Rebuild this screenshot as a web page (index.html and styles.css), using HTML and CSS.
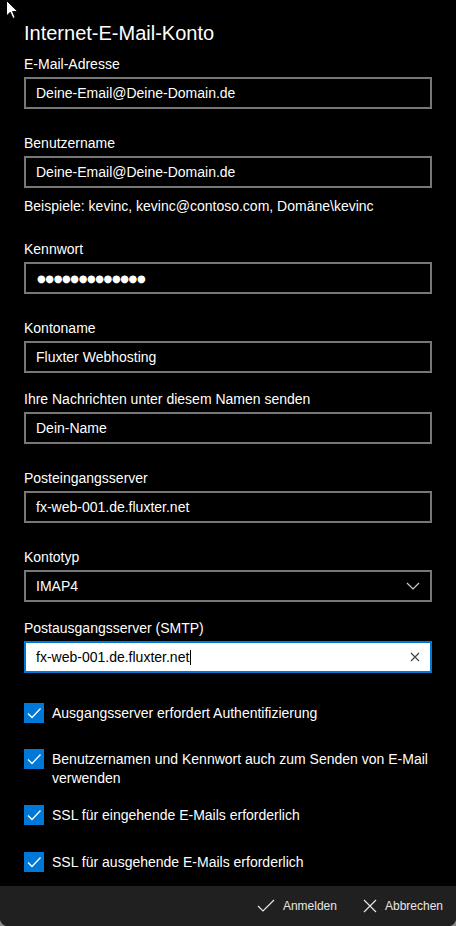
FILE: index.html
```html
<!DOCTYPE html>
<html lang="de">
<head>
  <meta charset="UTF-8" />
  <meta name="viewport" content="width=device-width, initial-scale=1" />
  <title>Internet-E-Mail-Konto</title>
  <link rel="stylesheet" href="styles.css">
</head>
<body>
  <div class="window">
    <div class="content">
      <h1 class="title">Internet-E-Mail-Konto</h1>

      <label class="label">E-Mail-Adresse</label>
      <div class="field">Deine-Email@Deine-Domain.de</div>

      <label class="label gap">Benutzername</label>
      <div class="field">Deine-Email@Deine-Domain.de</div>
      <p class="hint">Beispiele: kevinc, kevinc@contoso.com, Domäne\kevinc</p>

      <label class="label gap-hint">Kennwort</label>
      <div class="field password">●●●●●●●●●●●●●</div>

      <label class="label gap">Kontoname</label>
      <div class="field">Fluxter Webhosting</div>

      <label class="label gap-small">Ihre Nachrichten unter diesem Namen senden</label>
      <div class="field">Dein-Name</div>

      <label class="label gap">Posteingangsserver</label>
      <div class="field">fx-web-001.de.fluxter.net</div>

      <label class="label gap">Kontotyp</label>
      <div class="field select">
        <span>IMAP4</span>
        <svg class="chevron" width="14" height="8" viewBox="0 0 14 8">
          <path d="M1 1 L7 7 L13 1" fill="none" stroke="#cfcfcf" stroke-width="1.2"/>
        </svg>
      </div>

      <label class="label gap-small">Postausgangsserver (SMTP)</label>
      <div class="field focused">
        <span>fx-web-001.de.fluxter.net<span class="caret"></span></span>
        <svg class="clear" width="10" height="10" viewBox="0 0 10 10">
          <path d="M1 1 L9 9 M9 1 L1 9" fill="none" stroke="#444" stroke-width="1.2"/>
        </svg>
      </div>

      <div class="check first">
        <span class="box"><svg width="20" height="20" viewBox="0 0 20 20"><path d="M4 10.5 L8 14.5 L16.5 5.5" fill="none" stroke="#fff" stroke-width="1.3"/></svg></span>
        <span class="check-text">Ausgangsserver erfordert Authentifizierung</span>
      </div>
      <div class="check second">
        <span class="box"><svg width="20" height="20" viewBox="0 0 20 20"><path d="M4 10.5 L8 14.5 L16.5 5.5" fill="none" stroke="#fff" stroke-width="1.3"/></svg></span>
        <span class="check-text">Benutzernamen und Kennwort auch zum Senden von E-Mail verwenden</span>
      </div>
      <div class="check third">
        <span class="box"><svg width="20" height="20" viewBox="0 0 20 20"><path d="M4 10.5 L8 14.5 L16.5 5.5" fill="none" stroke="#fff" stroke-width="1.3"/></svg></span>
        <span class="check-text">SSL für eingehende E-Mails erforderlich</span>
      </div>
      <div class="check fourth">
        <span class="box"><svg width="20" height="20" viewBox="0 0 20 20"><path d="M4 10.5 L8 14.5 L16.5 5.5" fill="none" stroke="#fff" stroke-width="1.3"/></svg></span>
        <span class="check-text">SSL für ausgehende E-Mails erforderlich</span>
      </div>
    </div>

    <div class="actions">
      <button class="action">
        <svg width="18" height="14" viewBox="0 0 18 14"><path d="M1 7 L6 12 L17 1" fill="none" stroke="#e6e6e6" stroke-width="1.2"/></svg>
        Anmelden
      </button>
      <button class="action">
        <svg width="14" height="14" viewBox="0 0 14 14"><path d="M1 1 L13 13 M13 1 L1 13" fill="none" stroke="#e6e6e6" stroke-width="1.2"/></svg>
        Abbrechen
      </button>
    </div>

    <!-- mouse pointer -->
    <svg class="pointer" width="14" height="20" viewBox="0 0 14 20">
      <path d="M0.5 0.5 L0.5 16 L4.2 12.3 L7 18.5 L9.2 17.5 L6.6 11.6 L11.8 11.6 Z" fill="#fff" stroke="#000" stroke-width="1"/>
    </svg>
  </div>
</body>
</html>
```

FILE: styles.css
```css
html {
  background: #8a8a8a;
}
body {
  margin: 0;
  font-family: "Liberation Sans", Arial, sans-serif;
  color: #fff;
}
.window {
  position: relative;
  width: 456px;
  height: 926px;
  background: #000;
  border-radius: 0 0 8px 8px;
  overflow: hidden;
  display: flex;
  flex-direction: column;
}
.content {
  flex: 1;
  padding: 0 24px;
  display: flex;
  flex-direction: column;
}
.title {
  margin: 19px 0 0;
  font-size: 20px;
  font-weight: normal;
  line-height: 28px;
}
.label {
  display: block;
  margin-top: 7px;
  margin-bottom: 3px;
  font-size: 14px;
  line-height: 20px;
}
.label.gap {
  margin-top: 24px;
}
.label.gap-small {
  margin-top: 16px;
}
.label.gap-hint {
  margin-top: 23px;
}
.hint {
  margin: 8px 0 0;
  font-size: 14px;
  line-height: 20px;
}
.field {
  height: 32px;
  box-sizing: border-box;
  border: 2px solid #777;
  padding: 0 10px;
  display: flex;
  align-items: center;
  justify-content: space-between;
  font-size: 14px;
}
.password {
  font-family: "DejaVu Sans", sans-serif;
  font-size: 10px;
  letter-spacing: -0.4px;
  padding-left: 11px;
}
.focused {
  background: #fff;
  color: #000;
  border-color: #0078d7;
}
.caret {
  display: inline-block;
  width: 1px;
  height: 15px;
  margin-left: 1px;
  background: #000;
  vertical-align: -3px;
}
.check {
  display: flex;
  align-items: flex-start;
  gap: 8px;
  font-size: 14px;
  line-height: 19px;
}
.check.first {
  margin-top: 30px;
}
.check.second {
  margin-top: 26px;
}
.check.third {
  margin-top: 17px;
}
.check.fourth {
  margin-top: 27px;
}
.box {
  flex: none;
  width: 20px;
  height: 20px;
  background: #0078d7;
}
.box svg {
  display: block;
}
.check-text {
  padding-top: 1px;
}
.actions {
  height: 40px;
  background: #202020;
  display: flex;
  justify-content: flex-end;
  align-items: center;
  gap: 26px;
  padding-right: 13px;
}
.action {
  display: flex;
  align-items: center;
  gap: 8px;
  padding: 0;
  border: none;
  background: none;
  color: #e6e6e6;
  font-family: "Liberation Sans", Arial, sans-serif;
  font-size: 12px;
}
.action svg {
  display: block;
}
.pointer {
  position: absolute;
  left: 6px;
  top: 0;
}
```
